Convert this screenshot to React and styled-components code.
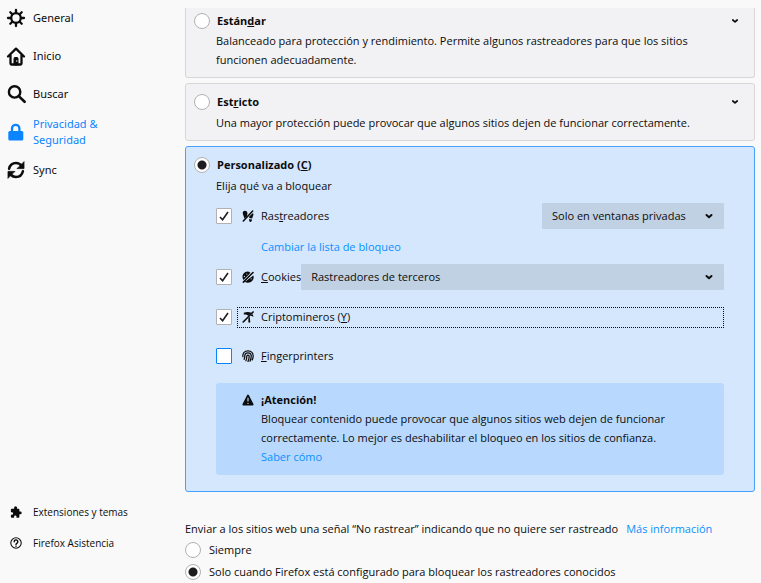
import React from "react";
import styled, { createGlobalStyle, css } from "styled-components";

const GlobalStyle = createGlobalStyle`
  *, *::before, *::after { box-sizing: border-box; }
  body {
    margin: 0;
    background: #f9f9fa;
    color: #0c0c0d;
    font-family: "Noto Sans", sans-serif;
    font-size: 11px;
    line-height: 19px;
  }
`;

const Page = styled.div`
  display: grid;
  grid-template-columns: 185px minmax(0, 1fr);
  height: 100vh;
  overflow: hidden;
`;

/* ---------- Sidebar ---------- */

const Sidebar = styled.aside`
  display: flex;
  flex-direction: column;
  justify-content: space-between;
  padding: 1px 0 30px 6px;
`;

const Nav = styled.nav`
  display: flex;
  flex-direction: column;
  gap: ${(p) => (p.$small ? "11px" : "4px")};
  font-size: ${(p) => (p.$small ? "10px" : "11px")};
  ${(p) =>
    p.$small &&
    css`
      font-family: "Open Sans", "Noto Sans", sans-serif;
    `}
`;

const NavLink = styled.a`
  display: grid;
  grid-template-columns: 20px minmax(0, 90px);
  align-items: center;
  justify-items: center;
  gap: 7px;
  min-height: ${(p) => (p.$small ? "20px" : "34px")};
  line-height: 16px;
  color: ${(p) => (p.$active ? "#0a84ff" : "inherit")};
  text-decoration: none;
`;

const NavLabel = styled.span`
  justify-self: start;
  white-space: ${(p) => (p.$nowrap ? "nowrap" : "normal")};
`;

/* ---------- Main column ---------- */

const Main = styled.main`
  padding: 8px 6px 0 0;
  overflow: hidden;
  font-family: "Open Sans", "Noto Sans", sans-serif;
`;

const Cards = styled.div`
  display: flex;
  flex-direction: column;
  gap: 5px;
`;

const Card = styled.section`
  border: 1px solid ${(p) => (p.$selected ? "#45a1ff" : "#d7d7db")};
  border-radius: 3px;
  background: ${(p) => (p.$selected ? "#d5e7fc" : "#f2f2f4")};
  padding: 10px 14px 8px 8px;
  ${(p) =>
    p.$selected &&
    css`
      padding-bottom: 16px;
    `}
  ${(p) =>
    p.$scrolled &&
    css`
      border-top: 0;
      border-radius: 0 0 3px 3px;
      padding: 5px 14px 8px 8px;
    `}
`;

const CardHead = styled.div`
  display: flex;
  align-items: center;
  justify-content: space-between;
  height: 16px;
`;

const RadioLabel = styled.label`
  display: flex;
  align-items: center;
  gap: ${(p) => (p.$bold ? "7px" : "8px")};
  height: 16px;
  line-height: 16px;
  font-weight: ${(p) => (p.$bold ? 700 : 400)};
`;

const Radio = styled.input.attrs({ type: "radio" })`
  appearance: none;
  flex: none;
  width: 16px;
  height: 16px;
  margin: 0;
  border: 1px solid #b1b1b3;
  border-radius: 50%;
  background: #fff;
  &:checked {
    background: radial-gradient(circle, #1d1d1f 0 4px, #fff 5px);
  }
`;

const Expander = styled.button`
  display: flex;
  padding: 0;
  border: 0;
  background: none;
  color: inherit;
`;

const CardBody = styled.div`
  margin-top: ${(p) => (p.$tight ? "2px" : "3px")};
  padding: 0 16px 0 22px;
`;

const Text = styled.p`
  margin: 0;
`;

const Key = styled.span`
  text-decoration: underline;
  text-decoration-skip-ink: none;
`;

const Link = styled.a`
  color: #0a90ff;
  text-decoration: none;
`;

/* ---------- Blocking options ---------- */

const Options = styled.div`
  display: flex;
  flex-direction: column;
  gap: 14px;
  margin-top: 8px;
`;

const OptionGroup = styled.div`
  display: flex;
  flex-direction: column;
`;

const Option = styled.div`
  display: flex;
  align-items: center;
  height: ${(p) => (p.$short ? "24px" : "26px")};
`;

const CheckCell = styled.span`
  display: grid;
  place-items: center;
  flex: none;
  margin-right: 5px;
  > * {
    grid-area: 1 / 1;
  }
  > svg {
    pointer-events: none;
  }
`;

const Checkbox = styled.input.attrs({ type: "checkbox" })`
  appearance: none;
  width: 16px;
  height: 16px;
  margin: 0;
  border: 1px solid #b1b1b3;
  border-radius: 1px;
  background: #fff;
  &:not(:checked) {
    border-color: #0a84ff;
  }
`;

const OptionLabel = styled.label`
  display: flex;
  align-items: center;
  flex: ${(p) => (p.$fit ? "none" : "1")};
  gap: 7px;
  height: 21px;
  padding-left: 4px;
  line-height: 18px;
  border: 1px dotted ${(p) => (p.$focused ? "#0c0c0d" : "transparent")};
  border-right-width: ${(p) => (p.$fit ? "0" : "1px")};
`;

const SubLink = styled.div`
  display: flex;
  align-items: center;
  height: 35px;
  padding-left: 45px;
`;

const SelectBox = styled.span`
  display: grid;
  align-items: center;
  flex: ${(p) => (p.$grow ? "1" : "0 0 182px")};
  > * {
    grid-area: 1 / 1;
  }
  > svg {
    justify-self: end;
    margin-right: 10px;
    pointer-events: none;
  }
`;

const Select = styled.select`
  appearance: none;
  width: 100%;
  height: 26px;
  padding: 0 24px 2px 10px;
  border: 0;
  border-radius: 1px;
  background: #c0d1e3;
  color: inherit;
  font: inherit;
`;

const Warning = styled.div`
  display: grid;
  grid-template-columns: 12px minmax(0, 1fr);
  column-gap: 7px;
  margin-top: 15px;
  padding: 7px 26px 9px 26px;
  border-radius: 3px;
  background: #b8d9fd;
  > svg {
    margin-top: 4px;
  }
`;

const WarningText = styled.div`
  display: flex;
  flex-direction: column;
`;

/* ---------- Do Not Track ---------- */

const Tracking = styled.section`
  display: flex;
  flex-direction: column;
  gap: 6px;
  margin-top: 27px;
`;

const TrackingIntro = styled.p`
  display: flex;
  gap: 8px;
  margin: 0 0 -2px;
  white-space: nowrap;
`;

/* ---------- Icons ---------- */

const Svg = ({ size = 20, children }) => (
  <svg width={size} height={size} viewBox="0 0 20 20" fill="none" stroke="currentColor" strokeWidth="2" strokeLinecap="round" strokeLinejoin="round" aria-hidden="true">
    {children}
  </svg>
);

const GearIcon = () => (
  <Svg>
    <circle cx="10" cy="10" r="4.800" strokeWidth="2.300" />
    <path d="M10 2v3M10 15v3M2 10h3M15 10h3M4.300 4.300l2 2M13.700 13.700l2 2M15.700 4.300l-2 2M6.300 13.700l-2 2" strokeWidth="2.300" />
  </Svg>
);
const HomeIcon = () => (
  <Svg>
    <path d="M2 10.500 10 2.600l8 7.900M4.500 9v8.600q0 .9.9.9h9.200q.9 0 .9-.9V9" strokeWidth="2.300" />
    <path d="M8 18.500v-6q0-1 1-1h2q1 0 1 1v6z" fill="currentColor" strokeWidth="1" />
    <path d="M10.800 14.400v1.200" stroke="#f9f9fa" strokeWidth=".8" />
  </Svg>
);
const SearchIcon = () => (
  <Svg>
    <circle cx="8.600" cy="7.900" r="5.700" strokeWidth="2.400" />
    <path d="m13 12.400 5.600 5.400" strokeWidth="2.600" />
  </Svg>
);
const LockIcon = () => (
  <Svg>
    <path d="M6 9.500V6.500a3.700 3.700 0 0 1 7.400 0v3" strokeWidth="2.300" />
    <rect x="2.300" y="9" width="15" height="9.600" rx="1.500" fill="currentColor" stroke="none" />
  </Svg>
);
const SyncIcon = () => (
  <Svg>
    <path d="M3.100 8.700C3.900 5.100 6.700 3 10 3c2.400 0 4.400 1.200 5.600 3M16.900 11.300C16.100 14.900 13.300 17 10 17c-2.400 0-4.400-1.200-5.600-3" strokeWidth="2.500" />
    <path d="M18 2v6.600h-6.600zM2 18v-6.600h6.600z" fill="currentColor" strokeWidth=".8" />
  </Svg>
);
const PuzzleIcon = () => (
  <Svg size={12}>
    <path fill="currentColor" stroke="none" d="M1.500 6q0-1.400 1.400-1.400h3.900V3a2.500 2.500 0 1 1 5 0v1.600h2.400q1.400 0 1.400 1.400v3.300h1.600a2.300 2.300 0 1 1 0 4.600h-1.600V18q0 1.400-1.400 1.400h-3.400v-1.700a2 2 0 0 0-4 0v1.700H2.900Q1.500 19.400 1.500 18v-3.300h1.600a2.100 2.100 0 0 0 0-4.200H1.500z" />
  </Svg>
);
const HelpIcon = () => (
  <Svg size={12}>
    <circle cx="10" cy="10" r="8.700" strokeWidth="1.800" />
    <path d="M7 8a3 3 0 1 1 4.700 2.300Q10 11.300 10 12.600" strokeWidth="2.400" />
    <circle cx="10" cy="15.300" r="1.300" fill="currentColor" stroke="none" />
  </Svg>
);
const ChevronIcon = ({ small }) => (
  <svg width="10" height="10" viewBox="0 0 10 10" fill="none" stroke="currentColor" strokeWidth={small ? 1.7 : 2} strokeLinecap="round" strokeLinejoin="round" aria-hidden="true">
    <path d={small ? "m2.800 4 2.200 1.900L7.200 4" : "m2.500 4 2.500 2.200L7.500 4"} />
  </svg>
);
const CheckIcon = () => (
  <svg width="12" height="12" viewBox="0 0 12 12" fill="none" stroke="#1d1d1f" strokeWidth="1.600" aria-hidden="true">
    <path d="m2 7 2.600 2.700L10 2" />
  </svg>
);
const TrackersIcon = () => (
  <Svg size={12}>
    <path fill="currentColor" stroke="none" d="M2 2.300C4.500.2 8.700 1.500 9 5.200c.2 2.600-.6 4.400-1.200 6L3.800 14C3.300 10.500-.5 5 2 2.300zM12 10.800l6.300-6c1.900 3-.5 6.200-1.300 9.200l-5-.6zM12 15.200l4.700.7c-.3 2.500-1.200 4.100-2.600 4-1.800-.2-2.400-2.300-2.100-4.700z" />
    <path d="M17.800 1.600 2.200 18.200" strokeWidth="2.600" />
  </Svg>
);
const CookieIcon = () => (
  <Svg size={12}>
    <path fill="currentColor" stroke="none" d="M9.500 .8c2.200-.4 3 1.600 4.800 2L2.600 15C-1.400 10 1.200 1.600 9.500.8zM19 7.500c2 6.500-2.500 12-9 12-2.200 0-4-.5-5.500-1.500z" />
    <path d="M18.400 2.500 2.300 18.500" strokeWidth="2.600" />
    <g fill="#d5e7fc" stroke="none">
      <circle cx="8" cy="5" r="1" />
      <circle cx="4" cy="9" r="1" />
      <circle cx="15.300" cy="13" r="1" />
    </g>
    <path d="M16.500 7 7.500 16" stroke="#d5e7fc" strokeWidth=".9" />
  </Svg>
);
const MinerIcon = () => (
  <Svg size={12}>
    <path fill="currentColor" stroke="none" d="M3 3C7.500.8 12 1.200 16 3L10.500 8.500C8.500 6.200 6 5.600 3 6zM14 8l3.200-3.200c1.400 1.600 1.800 3.200 1.600 5-1.200-1.200-2.800-1.700-4.800-1.800zM10.600 12l2.400-2.400.8 9q-1.600 1.600-3.200 0z" />
    <path d="M18.500 1.600 2 18.300" strokeWidth="2.700" />
  </Svg>
);
const FingerprintIcon = () => (
  <Svg size={12}>
    <path d="M1.500 11C.8 5.500 4.500 1.300 10 1.300s9.200 4.200 8.500 9.700c-.2 2.400-.7 4-1.500 5.500M3.500 15.500C4.800 13.500 4.600 12 4.600 10.200A5.400 5.400 0 0 1 15.400 10.200c0 3-.5 5.600-2 8.300M6.500 18c1.300-2.500 1.500-5 1.500-7.500a2 2 0 0 1 4 0c0 3-.6 5.700-2 8.500" strokeWidth="2.100" />
  </Svg>
);
const WarningIcon = () => (
  <Svg size={12}>
    <path d="M10 2.500 17.800 17.500H2.200z" fill="currentColor" strokeWidth="3" />
    <path d="M10 7v4.500M10 15.600v.2" stroke="#b8d9fd" strokeWidth="2" />
  </Svg>
);

/* ---------- Page ---------- */

const CATEGORIES = [
  { label: "General", Icon: GearIcon },
  { label: "Inicio", Icon: HomeIcon },
  { label: "Buscar", Icon: SearchIcon },
  { label: "Privacidad & Seguridad", Icon: LockIcon, active: true },
  { label: "Sync", Icon: SyncIcon },
];

const FOOTER_LINKS = [
  { label: "Extensiones y temas", Icon: PuzzleIcon },
  { label: "Firefox Asistencia", Icon: HelpIcon },
];

function CheckOption({ id, Icon, label, defaultChecked, focused, fit, short, children }) {
  return (
    <Option $short={short}>
      <CheckCell>
        <Checkbox id={id} defaultChecked={defaultChecked} />
        {defaultChecked && <CheckIcon />}
      </CheckCell>
      <OptionLabel htmlFor={id} $focused={focused} $fit={fit}>
        <Icon />
        <span>{label}</span>
      </OptionLabel>
      {children}
    </Option>
  );
}

function Dropdown({ label, value, grow }) {
  return (
    <SelectBox $grow={grow}>
      <Select aria-label={label} defaultValue={value}>
        <option>{value}</option>
      </Select>
      <ChevronIcon />
    </SelectBox>
  );
}

function LevelCard({ title, name, scrolled, children }) {
  return (
    <Card $scrolled={scrolled}>
      <CardHead>
        <RadioLabel $bold>
          <Radio name="level" />
          <span>{title}</span>
        </RadioLabel>
        <Expander type="button" aria-label={`Mostrar ${name}`}>
          <ChevronIcon small />
        </Expander>
      </CardHead>
      <CardBody $tight={scrolled}>
        <Text>{children}</Text>
      </CardBody>
    </Card>
  );
}

export default function App() {
  return (
    <Page>
      <GlobalStyle />
      <Sidebar>
        <Nav>
          {CATEGORIES.map(({ label, Icon, active }) => (
            <NavLink key={label} href="#" $active={active}>
              <Icon />
              <NavLabel>{label}</NavLabel>
            </NavLink>
          ))}
        </Nav>
        <Nav $small>
          {FOOTER_LINKS.map(({ label, Icon }) => (
            <NavLink key={label} href="#" $small>
              <Icon />
              <NavLabel $nowrap>{label}</NavLabel>
            </NavLink>
          ))}
        </Nav>
      </Sidebar>

      <Main>
        <Cards>
          <LevelCard scrolled name="Estándar" title={<>Están<Key>d</Key>ar</>}>
            Balanceado para protección y rendimiento. Permite algunos rastreadores para que los sitios funcionen adecuadamente.
          </LevelCard>
          <LevelCard name="Estricto" title={<>Est<Key>r</Key>icto</>}>
            Una mayor protección puede provocar que algunos sitios dejen de funcionar correctamente.
          </LevelCard>

          <Card $selected>
            <CardHead>
              <RadioLabel $bold>
                <Radio name="level" defaultChecked />
                <span>Personalizado (<Key>C</Key>)</span>
              </RadioLabel>
            </CardHead>
            <CardBody>
              <Text>Elija qué va a bloquear</Text>
              <Options>
                <OptionGroup>
                  <CheckOption id="trackers" Icon={TrackersIcon} label={<>Ras<Key>t</Key>readores</>} defaultChecked>
                    <Dropdown label="Rastreadores" value="Solo en ventanas privadas" />
                  </CheckOption>
                  <SubLink>
                    <Link href="#">Cambiar la lista de bloqueo</Link>
                  </SubLink>
                  <CheckOption id="cookies" Icon={CookieIcon} label={<><Key>C</Key>ookies</>} defaultChecked fit>
                    <Dropdown label="Cookies" value="Rastreadores de terceros" grow />
                  </CheckOption>
                </OptionGroup>
                <CheckOption id="miners" Icon={MinerIcon} label={<>Criptomineros (<Key>Y</Key>)</>} defaultChecked focused />
                <CheckOption id="fingerprinters" Icon={FingerprintIcon} label={<><Key>F</Key>ingerprinters</>} short />
              </Options>
              <Warning>
                <WarningIcon />
                <WarningText>
                  <strong>¡Atención!</strong>
                  <Text>
                    Bloquear contenido puede provocar que algunos sitios web dejen de funcionar correctamente. Lo mejor es deshabilitar el bloqueo en los sitios de confianza.
                  </Text>
                  <Link href="#">Saber cómo</Link>
                </WarningText>
              </Warning>
            </CardBody>
          </Card>
        </Cards>

        <Tracking>
          <TrackingIntro>
            <span>Enviar a los sitios web una señal “No rastrear” indicando que no quiere ser rastreado</span>
            <Link href="#">Más información</Link>
          </TrackingIntro>
          <RadioLabel>
            <Radio name="dnt" />
            <span>Siempre</span>
          </RadioLabel>
          <RadioLabel>
            <Radio name="dnt" defaultChecked />
            <span>Solo cuando Firefox está configurado para bloquear los rastreadores conocidos</span>
          </RadioLabel>
        </Tracking>
      </Main>
    </Page>
  );
}
